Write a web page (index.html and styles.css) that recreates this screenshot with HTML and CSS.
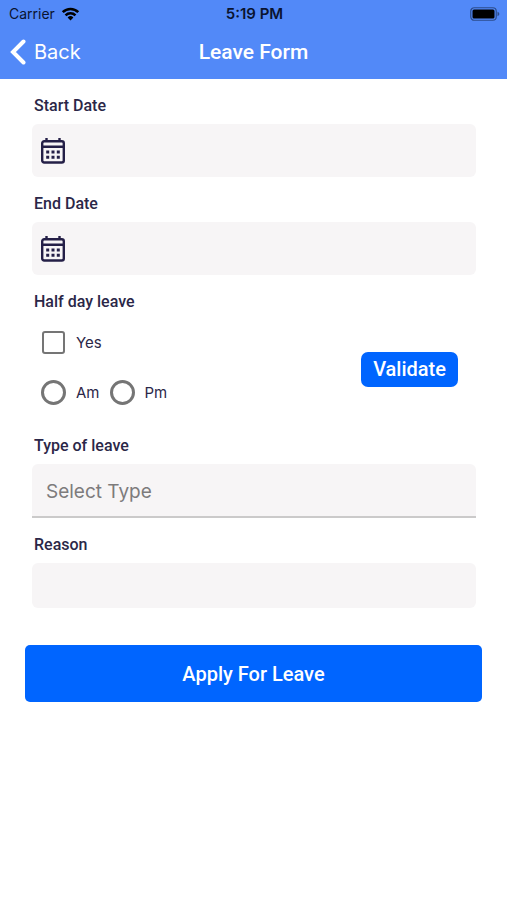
FILE: index.html
```html
<!DOCTYPE html>
<html lang="en">
<head>
<meta charset="utf-8">
<meta name="viewport" content="width=device-width, initial-scale=1">
<title>Leave Form</title>
<link rel="stylesheet" href="styles.css">
</head>
<body>
<header class="top">
  <div class="status">
    <div class="carrier">
      <span>Carrier</span>
      <svg class="wifi" viewBox="0 0 20 15" aria-hidden="true">
        <path d="M10 14.5 6.9 11.2a4.4 4.4 0 0 1 6.2 0z" fill="#000"/>
        <path d="M4.7 8.9a7.5 7.5 0 0 1 10.6 0M1.7 5.5a11.8 11.8 0 0 1 16.6 0" fill="none" stroke="#000" stroke-width="2.8"/>
      </svg>
    </div>
    <time class="time">5:19 PM</time>
    <svg class="battery" viewBox="0 0 30 14" aria-hidden="true">
      <rect x="0.75" y="0.75" width="25.5" height="12.5" rx="3.5" fill="none" stroke="#2c4c8c" stroke-width="1.2"/>
      <rect x="2.5" y="2.5" width="22" height="9" rx="1.5" fill="#000"/>
      <path d="M27.5 4.8c1.1.4 1.8 1.2 1.8 2.2s-.7 1.8-1.8 2.2z" fill="#2c4c8c"/>
    </svg>
  </div>
  <nav class="nav">
    <a class="back" href="#">
      <svg class="chevron" viewBox="0 0 16 26" aria-hidden="true"><path d="M13.5 2.500 3 13l10.500 10.500" fill="none" stroke="#fff" stroke-width="4" stroke-linecap="round" stroke-linejoin="miter"/></svg>
      <span>Back</span>
    </a>
    <h1 class="title">Leave Form</h1>
  </nav>
</header>
<main>
  <form class="form">
    <label class="label" for="start">Start Date</label>
    <div class="field date">
      <svg class="calendar" viewBox="0 0 24 26" aria-hidden="true">
        <path d="M3.200 3.300h17.600a2 2 0 0 1 2 2v17.200a2 2 0 0 1-2 2H3.200a2 2 0 0 1-2-2V5.300a2 2 0 0 1 2-2zM1.500 8.800h21M5.500 0v4M18.500 0v4" fill="none" stroke="#241f47" stroke-width="2.400"/>
        <path d="M5.200 12.500h3v3h-3zM10.500 12.500h3v3h-3zM15.800 12.500h3v3h-3zM5.200 17.800h3v3h-3zM10.500 17.800h3v3h-3zM15.800 17.800h3v3h-3z" fill="#241f47"/>
      </svg>
      <input class="input" id="start" type="text">
    </div>

    <label class="label" for="end">End Date</label>
    <div class="field date">
      <svg class="calendar" viewBox="0 0 24 26" aria-hidden="true">
        <path d="M3.200 3.300h17.600a2 2 0 0 1 2 2v17.200a2 2 0 0 1-2 2H3.200a2 2 0 0 1-2-2V5.300a2 2 0 0 1 2-2zM1.500 8.800h21M5.500 0v4M18.500 0v4" fill="none" stroke="#241f47" stroke-width="2.400"/>
        <path d="M5.200 12.500h3v3h-3zM10.500 12.500h3v3h-3zM15.800 12.500h3v3h-3zM5.200 17.800h3v3h-3zM10.500 17.800h3v3h-3zM15.800 17.800h3v3h-3z" fill="#241f47"/>
      </svg>
      <input class="input" id="end" type="text">
    </div>

    <h2 class="label">Half day leave</h2>
    <div class="half">
      <div class="choices">
        <div class="row">
          <input class="box" id="yes" type="checkbox"><label class="option" for="yes">Yes</label>
        </div>
        <div class="row">
          <input class="radio" id="am" name="part" type="radio"><label class="option" for="am">Am</label>
          <input class="radio" id="pm" name="part" type="radio"><label class="option" for="pm">Pm</label>
        </div>
      </div>
      <button class="validate" type="button">Validate</button>
    </div>

    <label class="label" for="type">Type of leave</label>
    <select class="field select" id="type">
      <option>Select Type</option>
    </select>

    <label class="label" for="reason">Reason</label>
    <input class="field reason" id="reason" type="text">

    <button class="apply" type="submit">Apply For Leave</button>
  </form>
</main>
</body>
</html>
```
FILE: styles.css
```css
* {
  box-sizing: border-box;
}

body {
  margin: 0;
  background: #fff;
  color: #2b2748;
  font-family: Roboto, sans-serif;
}

input,
select,
button {
  margin: 0;
  border: 0;
  font-family: inherit;
}

.top {
  background: #5289f8;
}

.status,
.nav {
  display: grid;
  grid-template-columns: 1fr auto 1fr;
  align-items: center;
}

.status {
  height: 27px;
  padding: 0 7px 0 9px;
  color: #0a1430;
  font-family: Inter, sans-serif;
  font-size: 14px;
}

.carrier {
  display: flex;
  align-items: center;
  gap: 6px;
}

.wifi {
  width: 19px;
  height: 14px;
}

.time {
  font-size: 15px;
  font-weight: 600;
}

.battery {
  justify-self: end;
  width: 30px;
  height: 14px;
}

.nav {
  height: 52px;
  padding: 0 10px 2px;
}

.back {
  display: flex;
  align-items: center;
  gap: 8px;
  color: #fff;
  font-family: Inter, sans-serif;
  font-size: 20px;
  text-decoration: none;
}

.chevron {
  width: 16px;
  height: 26px;
}

.title {
  margin: 0;
  color: #fff;
  font-size: 21px;
  font-weight: 500;
}

.form {
  display: flex;
  flex-direction: column;
  padding: 0 25px;
}

.label {
  margin: 17px 9px 8px;
  font-size: 16px;
  font-weight: 500;
  line-height: 20px;
}

.field {
  margin: 0 6px 0 7px;
  border-radius: 6px;
  background: #f7f5f6;
}

.date {
  display: flex;
  align-items: center;
  gap: 12px;
  height: 53px;
  padding: 0 9px;
}

.calendar {
  width: 24px;
  height: 26px;
}

.input {
  flex: 1;
  height: 100%;
  min-width: 0;
  background: transparent;
  font-size: 16px;
}

.half {
  display: flex;
  align-items: center;
  justify-content: space-between;
  margin: -3px 24px 2px 16px;
}

.row {
  display: flex;
  align-items: center;
  height: 50px;
}

.box,
.radio {
  appearance: none;
  border: 2px solid #757575;
  background: #fff;
}

.box {
  width: 23px;
  height: 23px;
  margin: 0 1px;
  border-radius: 3px;
}

.radio {
  width: 25px;
  height: 25px;
  border-width: 3px;
  border-radius: 50%;
}

.option {
  margin: 0 10px;
  font-family: Inter, sans-serif;
  font-size: 15px;
}

.validate,
.apply {
  background: #0065ff;
  color: #fff;
  font-size: 20px;
  font-weight: 500;
}

.validate {
  height: 35px;
  padding: 0 12px;
  margin-top: 4px;
  border-radius: 7px;
}

.select {
  appearance: none;
  height: 54px;
  padding: 3px 14px 0;
  border-bottom: 2px solid #cbcaca;
  border-radius: 6px 6px 0 0;
  color: #7d7b7c;
  font-family: Inter, sans-serif;
  font-size: 19px;
}

.reason {
  height: 45px;
  padding: 0 14px;
  font-size: 16px;
}

.apply {
  height: 57px;
  margin-top: 37px;
  border-radius: 5px;
}
```
